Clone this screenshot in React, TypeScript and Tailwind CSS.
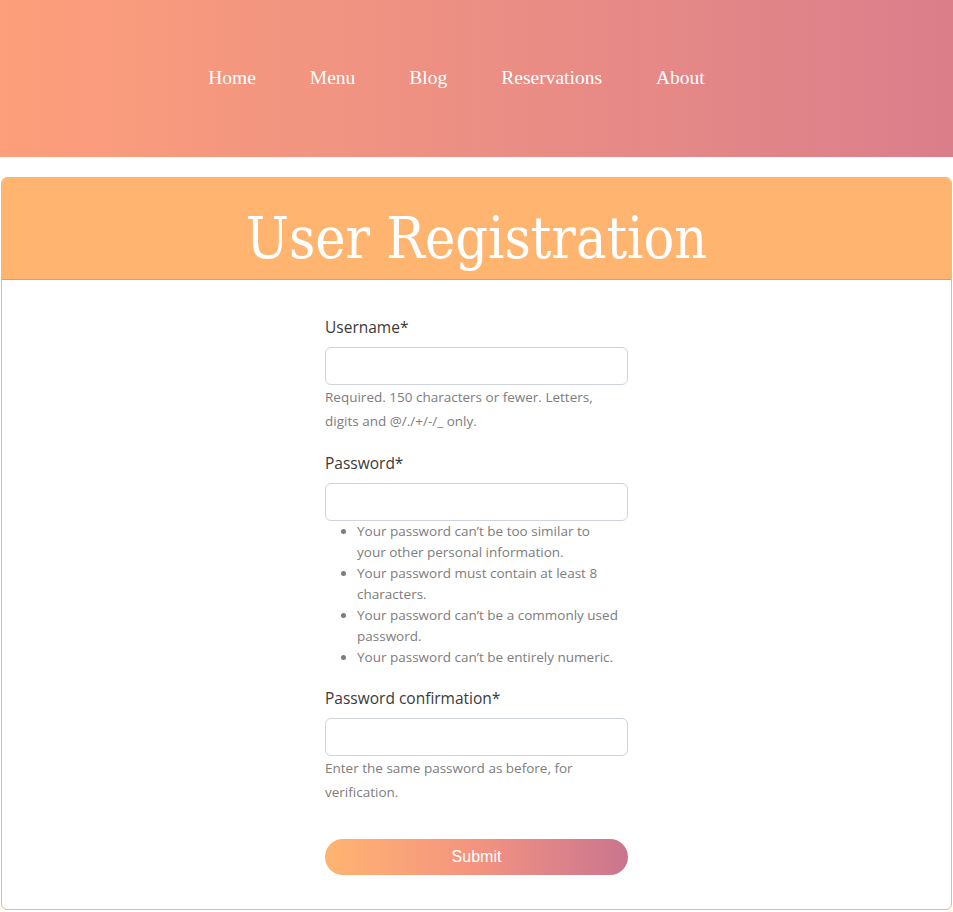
import React from 'react';

const NAV = ['Home', 'Menu', 'Blog', 'Reservations', 'About'];

const PASSWORD_RULES = [
  'Your password can’t be too similar to your other personal information.',
  'Your password must contain at least 8 characters.',
  'Your password can’t be a commonly used password.',
  'Your password can’t be entirely numeric.',
];

function Field({ label, type, children }: { label: string; type: string; children?: React.ReactNode }) {
  return (
    <div className="mb-[18px]">
      <label className="block text-[15.5px] leading-6 text-[#3a3a3a] mb-[8px]">{label}</label>
      <input
        type={type}
        className="block w-full h-[38px] rounded-[6px] border border-[#ced4da] bg-white px-3 outline-none"
      />
      {children}
    </div>
  );
}

export default function App() {
  return (
    <div className="min-h-[912px] bg-white font-['Open_Sans','Noto_Sans',sans-serif]">
      {/* Top nav */}
      <header className="h-[157px] bg-gradient-to-r from-[#fd9f7a] to-[#db7e8b] flex items-center justify-center pr-[40px]">
        <nav className="flex items-center gap-[54px] font-['Liberation_Serif',serif] text-[19.5px] text-white -mt-[2px]">
          {NAV.map((item) => (
            <a key={item} href="#" className="leading-none">
              {item}
            </a>
          ))}
        </nav>
      </header>

      <main className="pt-[20px] px-[1px]">
        <div className="rounded-[6px] border border-[#ffb570] overflow-hidden">
          {/* Card header */}
          <div className="h-[102px] bg-[#ffb570] border-b border-[#dd9d60] flex items-center justify-center">
            <h1 className="font-['DejaVu_Serif_Condensed','DejaVu_Serif',serif] text-[57px] text-white leading-none mt-[20px]">
              User Registration
            </h1>
          </div>

          {/* Card body */}
          <div className="flex justify-center pt-[35px] pb-[34px]">
            <form className="w-[303px]" onSubmit={(e) => e.preventDefault()}>
              <Field label="Username*" type="text">
                <p className="text-[13.5px] leading-6 text-[#7d7d7d]">
                  Required. 150 characters or fewer. Letters, digits and @/./+/-/_ only.
                </p>
              </Field>

              <Field label="Password*" type="password">
                <ul className="list-disc pl-[32px] pr-[8px] text-[13.5px] leading-[21px] text-[#7d7d7d] marker:text-[#7d7d7d]">
                  {PASSWORD_RULES.map((rule) => (
                    <li key={rule}>{rule}</li>
                  ))}
                </ul>
              </Field>

              <Field label="Password confirmation*" type="password">
                <p className="text-[13.5px] leading-6 text-[#7d7d7d]">
                  Enter the same password as before, for verification.
                </p>
              </Field>

              <button
                type="submit"
                className="mt-[35px] block w-full h-[36px] rounded-full bg-gradient-to-r from-[#ffb470] via-[#f4937f] to-[#c9758f] text-white text-[16px] font-['Liberation_Sans',sans-serif]"
              >
                Submit
              </button>
            </form>
          </div>
        </div>
      </main>
    </div>
  );
}
